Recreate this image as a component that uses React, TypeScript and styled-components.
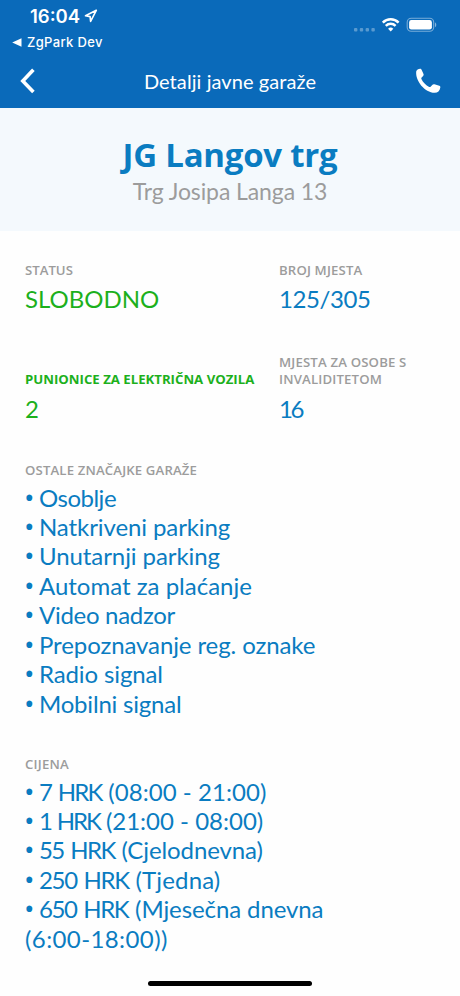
import React from 'react';
import styled, { createGlobalStyle } from 'styled-components';

const BLUE = '#0a7cc1';
const GREEN = '#1cb01c';
const GREY = '#9c9c9c';

const GlobalStyle = createGlobalStyle`
  body {
    margin: 0;
    background: #fefefe;
    font-family: Lato, 'Open Sans', sans-serif;
  }
`;

const Screen = styled.div`
  display: flex;
  flex-direction: column;
  width: 460px;
  height: 996px;
  overflow: hidden;
`;

const Header = styled.header`
  display: flex;
  flex-direction: column;
  height: 108px;
  background: #0a6aba;
  color: #fff;
`;

const StatusBar = styled.div`
  display: flex;
  justify-content: space-between;
  height: 34px;
  padding: 0 22px 0 30px;
`;

const Clock = styled.div`
  display: flex;
  align-items: flex-start;
  gap: 3.5px;
  padding-top: 4px;
  font: 600 18.5px/24px Inter, sans-serif;
  letter-spacing: 0;

  svg {
    margin-top: 5px;
  }
`;

const Indicators = styled.div`
  display: flex;
  align-items: flex-start;
  gap: 5px;
  padding-top: 17px;
`;

const BackToApp = styled.div`
  display: flex;
  align-items: center;
  gap: 5px;
  height: 16px;
  padding-left: 12px;
  font: 500 13px/16px Inter, sans-serif;
  letter-spacing: 0.35px;
`;

const NavBar = styled.nav`
  display: grid;
  grid-template-columns: 60px 1fr 60px;
  align-items: center;
  height: 58px;
`;

const IconButton = styled.button<{ $align: 'start' | 'end' }>`
  display: flex;
  justify-content: ${(p) => p.$align};
  padding: ${(p) => (p.$align === 'start' ? '4px 0 0 20px' : '3px 19px 0 0')};
  border: 0;
  background: none;
  color: inherit;
`;

const NavTitle = styled.h1`
  margin: 4px 0 0;
  text-align: center;
  font-size: 20px;
  font-weight: 400;
  line-height: 24px;
  letter-spacing: 0.08px;
  white-space: nowrap;
`;

const Hero = styled.section`
  display: flex;
  flex-direction: column;
  align-items: center;
  height: 122.5px;
  background: #f4f9fd;
`;

const GarageName = styled.h2`
  margin: 27px 0 0;
  color: ${BLUE};
  font: 700 33px/40px 'Open Sans', sans-serif;
  letter-spacing: -0.25px;
`;

const Address = styled.p`
  margin: 2px 0 0;
  color: ${GREY};
  font-size: 23px;
  line-height: 28px;
  letter-spacing: -0.1px;
`;

const Details = styled.main`
  display: flex;
  flex-direction: column;
  padding: 31px 25px 0;
`;

const Row = styled.div<{ $gap: number }>`
  display: grid;
  grid-template-columns: 254px 1fr;
  align-items: end;
  margin-bottom: ${(p) => p.$gap}px;
`;

const Section = styled.section<{ $gap?: number }>`
  margin-bottom: ${(p) => p.$gap ?? 0}px;
`;

const Label = styled.h3<{ $green?: boolean; $ls?: number }>`
  margin: 0;
  color: ${(p) => (p.$green ? GREEN : GREY)};
  font: ${(p) => (p.$green ? 700 : 600)} 13.2px/17.5px 'Open Sans', sans-serif;
  letter-spacing: ${(p) => p.$ls ?? 0}px;
  white-space: nowrap;
`;

const Value = styled.div<{ $green?: boolean; $ls?: number }>`
  margin-top: 5px;
  color: ${(p) => (p.$green ? GREEN : BLUE)};
  font-size: 24px;
  line-height: 29.4px;
  letter-spacing: ${(p) => p.$ls ?? 0}px;
`;

const List = styled.ul`
  margin: 3px 0 0;
  padding: 0;
  list-style: none;
  color: ${BLUE};
  font-size: 24px;
  line-height: 29.43px;
`;

const Item = styled.li<{ $ls?: number }>`
  display: flex;
  letter-spacing: ${(p) => p.$ls ?? 0}px;
  white-space: pre;

  &::before {
    content: '•';
    flex: none;
    width: 15px;
    margin-left: -1px;
    font-family: 'Open Sans', sans-serif;
    font-size: 28px;
    letter-spacing: 0;
  }
`;

const Amount = styled.span<{ $ls: number }>`
  letter-spacing: ${(p) => p.$ls}px;
  word-spacing: 2px;
`;

const Wrapped = styled.div`
  letter-spacing: 0.4px;
`;

const HomeIndicator = styled.div`
  flex: none;
  align-self: center;
  width: 164px;
  height: 5px;
  margin: auto 0 10px;
  border-radius: 3px;
  background: #000;
`;

const features: [string, number][] = [
  ['Osoblje', -0.5],
  ['Natkriveni parking', -0.1],
  ['Unutarnji parking', -0.08],
  ['Automat za plaćanje', 0],
  ['Video nadzor', -0.3],
  ['Prepoznavanje reg. oznake', -0.1],
  ['Radio signal', -0.12],
  ['Mobilni signal', -0.2],
];

const prices: { amount: string; amountLs: number; period: string; periodLs: number }[] = [
  { amount: '7 HRK ', amountLs: -1.7, period: '(08:00 - 21:00)', periodLs: 0.05 },
  { amount: '1 HRK ', amountLs: -2.1, period: '(21:00 - 08:00)', periodLs: 0 },
  { amount: '55 HRK ', amountLs: -1.55, period: '(Cjelodnevna)', periodLs: -0.1 },
  { amount: '250 HRK ', amountLs: -1.35, period: '(Tjedna)', periodLs: 0.15 },
  { amount: '650 HRK ', amountLs: -1.4, period: '(Mjesečna dnevna', periodLs: -0.1 },
];

const LocationIcon = () => (
  <svg width="14" height="14" viewBox="0 0 14 14" fill="none" stroke="#fff" strokeWidth="1.6" strokeLinejoin="round">
    <path d="M12.3 1.3 1.5 6.8l4.6.8.5 4.8Z" />
  </svg>
);

const CellDots = () => (
  <svg width="23" height="16" viewBox="0 0 23 16" fill="#fff" opacity=".32">
    {[1, 6.8, 12.6, 18.4].map((x) => (
      <rect key={x} x={x} y="11" width="3.4" height="3.4" rx="1" />
    ))}
  </svg>
);

const WifiIcon = () => (
  <svg width="20" height="16" viewBox="0 0 20 16" fill="none" stroke="#fff" strokeWidth="2.5">
    <path d="M1.8 5.6a11.2 11.2 0 0 1 15.8 0" />
    <path d="M4.8 8.8a7 7 0 0 1 9.8 0" />
    <path d="m9.7 14.4-2.6-2.7a3.8 3.8 0 0 1 5.2 0Z" fill="#fff" stroke="none" />
  </svg>
);

const BatteryIcon = () => (
  <svg width="32" height="16" viewBox="0 0 32 16">
    <rect x="1.2" y="1.3" width="26.5" height="13" rx="4" fill="none" stroke="#fff" strokeOpacity=".45" strokeWidth="1.1" />
    <rect x="3.1" y="3.1" width="22.8" height="9.5" rx="2.3" fill="#fff" />
    <path d="M29 5.6c1.7.6 1.7 4 0 4.6Z" fill="#fff" opacity=".5" />
  </svg>
);

const ReturnArrow = () => (
  <svg width="10" height="9" viewBox="0 0 10 9" fill="#fff">
    <path d="M.2 4.5 9.5.3v8.4Z" />
  </svg>
);

const BackIcon = () => (
  <svg width="16" height="26" viewBox="0 0 16 26" fill="none" stroke="#fff" strokeWidth="3.6">
    <path d="M13.4 1.8 2.8 12.9l10.6 11.1" />
  </svg>
);

const PhoneIcon = () => (
  <svg width="26" height="26" viewBox="0 0 26 26" fill="#fff">
    <path d="M1.2 3.5C1.3 2 3.6.8 5.1.7c.8 0 1.2.4 1.5 1.1l1.9 4.1c.3.8.1 1.4-.4 2L6.6 9.6c-.4.5-.4.9-.2 1.4 1.6 3.3 4.4 6.2 7.8 7.9.6.3 1 .2 1.4-.2l1.9-2c.5-.5 1.1-.7 1.9-.4l4.9 1.4c.9.3 1.2.9 1 1.7-.5 3.2-2.5 5.4-5.6 5.4C9.7 24.6.3 13 1.2 3.5Z" />
  </svg>
);

export default function App() {
  return (
    <Screen>
      <GlobalStyle />
      <Header>
        <StatusBar>
          <Clock>
            16:04
            <LocationIcon />
          </Clock>
          <Indicators>
            <CellDots />
            <WifiIcon />
            <BatteryIcon />
          </Indicators>
        </StatusBar>
        <BackToApp>
          <ReturnArrow />
          ZgPark Dev
        </BackToApp>
        <NavBar>
          <IconButton $align="start" aria-label="Natrag">
            <BackIcon />
          </IconButton>
          <NavTitle>Detalji javne garaže</NavTitle>
          <IconButton $align="end" aria-label="Nazovi">
            <PhoneIcon />
          </IconButton>
        </NavBar>
      </Header>

      <Hero>
        <GarageName>JG Langov trg</GarageName>
        <Address>Trg Josipa Langa 13</Address>
      </Hero>

      <Details>
        <Row $gap={40.1}>
          <div>
            <Label>STATUS</Label>
            <Value $green>SLOBODNO</Value>
          </div>
          <div>
            <Label $ls={0.15}>BROJ MJESTA</Label>
            <Value $ls={-0.4}>125/305</Value>
          </div>
        </Row>
        <Row $gap={39.1}>
          <div>
            <Label $green>PUNIONICE ZA ELEKTRIČNA VOZILA</Label>
            <Value $green>2</Value>
          </div>
          <div>
            <Label $ls={0.16}>
              MJESTA ZA OSOBE S<br />
              INVALIDITETOM
            </Label>
            <Value $ls={-2.5}>16</Value>
          </div>
        </Row>
        <Section $gap={38.1}>
          <Label $ls={0.14}>OSTALE ZNAČAJKE GARAŽE</Label>
          <List>
            {features.map(([text, ls]) => (
              <Item key={text} $ls={ls}>{text}</Item>
            ))}
          </List>
        </Section>
        <Section>
          <Label $ls={0.2}>CIJENA</Label>
          <List>
            {prices.map((price) => (
              <Item key={price.amount} $ls={price.periodLs}>
                <Amount $ls={price.amountLs}>{price.amount}</Amount>
                {price.period}
              </Item>
            ))}
            <Wrapped>(6:00-18:00))</Wrapped>
          </List>
        </Section>
      </Details>

      <HomeIndicator />
    </Screen>
  );
}
